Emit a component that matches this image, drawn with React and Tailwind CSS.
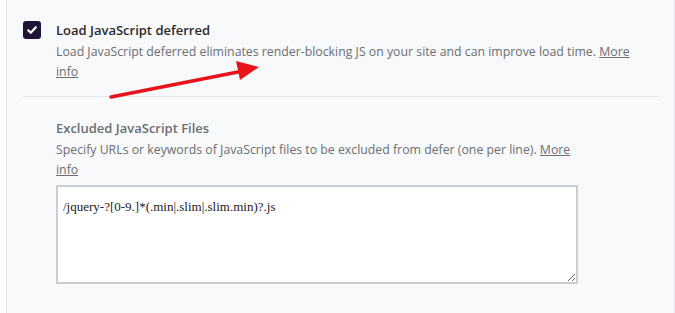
export default function App() {
  return (
    <div className="w-[675px] h-[313px] bg-white overflow-hidden relative" style={{ fontFamily: '"Open Sans", "Noto Sans", sans-serif' }}>
      <div className="ml-[6px] h-[340px] border-l border-r border-[#e5e7ea] bg-[#f8f9fa] pt-[20px] pl-[16px] pr-[16px]">
        <div className="flex gap-[15px]">
          <div className="w-[18px] h-[18px] mt-[1px] rounded-[3px] bg-[#1d1535] flex items-center justify-center shrink-0">
            <svg width="12" height="12" viewBox="0 0 12 12">
              <path d="M2.2 6.3 L4.8 8.8 L9.8 3.2" fill="none" stroke="white" strokeWidth="2.2" strokeLinecap="round" strokeLinejoin="round" />
            </svg>
          </div>
          <div className="flex-1 pr-[4px]">
            <div className="text-[13px] leading-[20px] font-semibold text-[#2b2b2b]">Load JavaScript deferred</div>
            <div className="mt-[2px] text-[12.3px] leading-[20px] text-[#6b6e72]">
              Load JavaScript deferred eliminates render-blocking JS on your site and can improve load time. <span className="underline">More</span> <span className="underline">info</span>
            </div>
          </div>
        </div>
        <div className="mt-[14px] h-px bg-[#e3e5e8]"></div>
        <div className="pl-[33px] pt-[21px] pr-[60px]">
          <div className="text-[13px] leading-[20px] font-semibold text-[#6b6e72]">Excluded JavaScript Files</div>
          <div className="mt-[2px] w-[525px] text-[12.3px] leading-[20px] text-[#6b6e72]">
            Specify URLs or keywords of JavaScript files to be excluded from defer (one per line). <span className="underline">More</span> <span className="underline">info</span>
          </div>
          <textarea
            className="mt-[5px] block w-[522px] h-[99px] bg-white border-2 border-[#c9ccd0] rounded-[1px] px-[5px] pt-[10px] pb-[6px] text-[13px] text-[#222] outline-none resize-y"
            style={{ fontFamily: '"Liberation Serif", serif' }}
            defaultValue="/jquery-?[0-9.]*(.min|.slim|.slim.min)?.js"
          />
        </div>
      </div>
      <svg className="absolute left-0 top-0 pointer-events-none" width="675" height="313">
        <line x1="111" y1="97" x2="238" y2="72" stroke="#e8141b" strokeWidth="3.5" strokeLinecap="round" />
        <polygon points="259,67 236,61 240,80" fill="#e8141b" />
      </svg>
    </div>
  );
}
